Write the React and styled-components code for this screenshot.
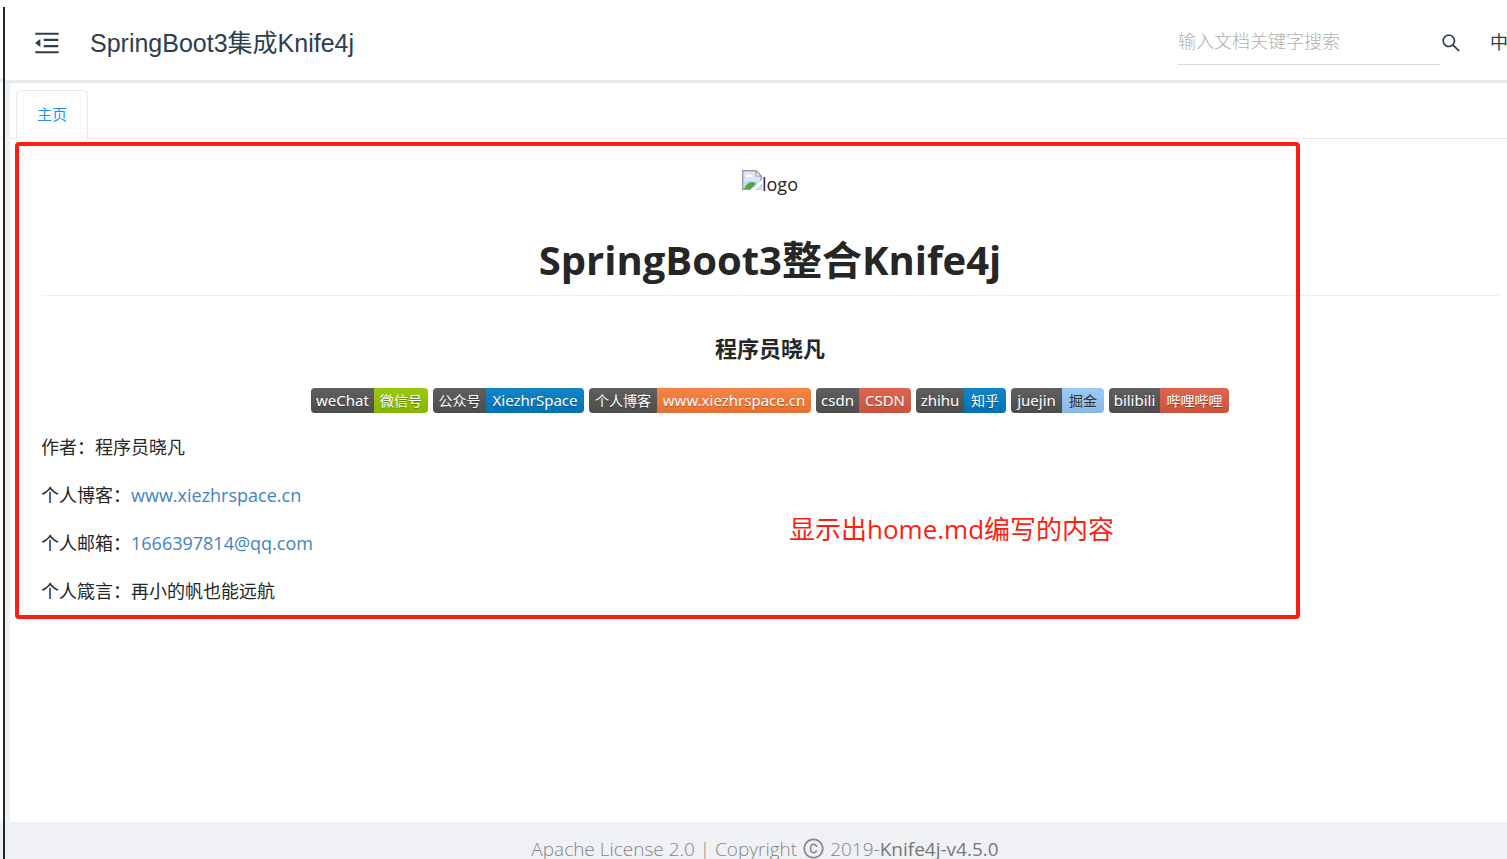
import styled, { createGlobalStyle } from "styled-components";
import {
  AiOutlineCopyright,
  AiOutlineMenuFold,
  AiOutlineSearch,
} from "react-icons/ai";

const badges = [
  { label: "weChat", value: "微信号", color: "#97ca00", left: 63, right: 54 },
  { label: "公众号", value: "XiezhrSpace", color: "#007ec6", left: 53, right: 98 },
  { label: "个人博客", value: "www.xiezhrspace.cn", color: "#fe7d37", left: 68, right: 154 },
  { label: "csdn", value: "CSDN", color: "#e05d44", left: 43, right: 52 },
  { label: "zhihu", value: "知乎", color: "#007ec6", left: 48, right: 42 },
  { label: "juejin", value: "掘金", color: "#99ccff", left: 51, right: 42, dark: true },
  { label: "bilibili", value: "哔哩哔哩", color: "#e05d44", left: 51, right: 69 },
];

const isLatin = (text) => /^[\w.]+$/.test(text);

export default function App() {
  return (
    <>
      <GlobalStyle />
      <ShellStyled>
        <SiderEdgeStyled>
          <SiderHeaderStyled />
          <SiderTabStyled />
          <SiderBodyStyled />
          <SiderFooterStyled />
        </SiderEdgeStyled>
        <SiderStyled />
        <MainStyled>
          <Header />
          <BodyStyled>
            <Tabs />
            <Home />
          </BodyStyled>
          <Footer />
        </MainStyled>
      </ShellStyled>
    </>
  );
}

function Header() {
  return (
    <HeaderStyled>
      <IconButtonStyled $size={30} type="button" aria-label="折叠菜单">
        <AiOutlineMenuFold />
      </IconButtonStyled>
      <TitleStyled>SpringBoot3集成Knife4j</TitleStyled>
      <SearchStyled role="search">
        <SearchInputStyled
          type="text"
          placeholder="输入文档关键字搜索"
          aria-label="输入文档关键字搜索"
        />
        <IconButtonStyled $size={22} type="button" aria-label="搜索">
          <AiOutlineSearch />
        </IconButtonStyled>
      </SearchStyled>
      <LanguageStyled type="button">中</LanguageStyled>
    </HeaderStyled>
  );
}

function Tabs() {
  return (
    <TabsStyled role="tablist">
      <TabStyled type="button" role="tab" aria-selected="true">
        主页
      </TabStyled>
    </TabsStyled>
  );
}

function Badge({ label, value, color, left, right, dark }) {
  return (
    <BadgeStyled href="#">
      <BadgePartStyled $width={left} $color="#555" $latin={isLatin(label)}>
        {label}
      </BadgePartStyled>
      <BadgePartStyled
        $width={right}
        $color={color}
        $latin={isLatin(value)}
        $dark={dark}
      >
        {value}
      </BadgePartStyled>
    </BadgeStyled>
  );
}

function Home() {
  return (
    <HomeStyled>
      <LogoStyled>
        <BrokenImage />
        logo
      </LogoStyled>
      <HeadingStyled>SpringBoot3整合Knife4j</HeadingStyled>
      <SubheadingStyled>程序员晓凡</SubheadingStyled>
      <BadgesStyled>
        {badges.map((badge) => (
          <Badge key={badge.label} {...badge} />
        ))}
      </BadgesStyled>
      <ParagraphStyled>作者：程序员晓凡</ParagraphStyled>
      <ParagraphStyled>
        个人博客：<LinkStyled href="#">www.xiezhrspace.cn</LinkStyled>
      </ParagraphStyled>
      <ParagraphStyled>
        个人邮箱：<LinkStyled href="#">1666397814@qq.com</LinkStyled>
      </ParagraphStyled>
      <ParagraphStyled>个人箴言：再小的帆也能远航</ParagraphStyled>
      <MarkerStyled>
        <MarkerTextStyled>显示出home.md编写的内容</MarkerTextStyled>
      </MarkerStyled>
    </HomeStyled>
  );
}

function BrokenImage() {
  return (
    <svg width="20" height="20" viewBox="0 0 20 20" aria-hidden="true">
      <path d="M1 1h13l5 5v13H1z" fill="#c6d9f7" />
      <path d="M2 2h11v5h5v4H2z" fill="#d9e6fb" />
      <path d="M4 7q0-2 2-2 1-2 3 0 2 0 2 2z" fill="#fff" />
      <path d="M2 19q3-7 8-7 3 0 4 2l-5 5z" fill="#4fa83a" />
      <path d="M14 1v5h5z" fill="#fff" stroke="#9a9a9a" />
      <path d="M.7 19.3V.7H14l5.3 5.3v13.3z" fill="none" stroke="#9a9a9a" strokeWidth="1.3" />
      <path d="M8 20 20 10v4l-6 6z" fill="#fff" />
      <path d="m15 20 5-5v5z" fill="#c6d9f7" />
    </svg>
  );
}

function Footer() {
  return (
    <FooterStyled>
      Apache License 2.0 | Copyright
      <AiOutlineCopyright size={23} />
      <span>
        2019-<VersionStyled>Knife4j-v4.5.0</VersionStyled>
      </span>
    </FooterStyled>
  );
}

const GlobalStyle = createGlobalStyle`
  * {
    box-sizing: border-box;
  }

  body {
    margin: 0;
    background: #fff;
    color: #262626;
    font-family: "Open Sans", "Noto Sans CJK SC", sans-serif;
  }

  button {
    padding: 0;
    border: none;
    background: none;
    font-family: inherit;
    cursor: pointer;
  }
`;

const ShellStyled = styled.div`
  display: flex;
  height: 100vh;
  overflow: hidden;
`;

const SiderEdgeStyled = styled.div`
  display: flex;
  flex-direction: column;
  width: 3px;
`;

const SiderHeaderStyled = styled.div`
  height: 82px;
  border-bottom: 3px solid #e8ebef;
`;

const SiderTabStyled = styled.div`
  height: 56px;
  border-bottom: 1px solid #e8e8e8;
`;

const SiderBodyStyled = styled.div`
  flex: 1;
`;

const SiderFooterStyled = styled.div`
  height: 38px;
  background: #f0f2f5;
`;

const SiderStyled = styled.aside`
  width: 2px;
  margin-top: 7px;
  background: #1d282e;
`;

const MainStyled = styled.div`
  display: flex;
  flex: 1;
  flex-direction: column;
  min-width: 0;
  background: #eff1f5;
`;

const HeaderStyled = styled.header`
  display: flex;
  align-items: center;
  height: 83px;
  padding: 5px 0 0 27px;
  overflow: hidden;
  background: #fff;
  border-bottom: 3px solid #e7eaee;
  color: #2c3e50;
`;

const IconButtonStyled = styled.button`
  display: flex;
  color: inherit;
  font-size: ${(props) => props.$size}px;
`;

const TitleStyled = styled.span`
  margin-left: 28px;
  font-family: "Liberation Sans", "Noto Sans CJK SC", sans-serif;
  font-size: 25px;
  line-height: 36px;
  white-space: nowrap;
`;

const SearchStyled = styled.form`
  display: flex;
  align-items: center;
  margin-left: auto;
`;

const SearchInputStyled = styled.input`
  width: 262px;
  height: 44px;
  padding: 0 0 2px;
  border: none;
  border-bottom: 1px solid #d9d9d9;
  outline: none;
  font-family: inherit;
  font-size: 18px;
  font-weight: 300;

  &::placeholder {
    color: #b0b0b0;
  }
`;

const LanguageStyled = styled.button`
  flex: none;
  width: 17px;
  padding-bottom: 4px;
  margin-left: 28px;
  color: #2c3e50;
  font-size: 18px;
  white-space: nowrap;
`;

const BodyStyled = styled.main`
  flex: 1;
  margin-left: 5px;
  padding-top: 7px;
  background: #fff;
`;

const TabsStyled = styled.div`
  display: flex;
  padding-left: 6px;
  border-bottom: 1px solid #e8e8e8;
`;

const TabStyled = styled.button`
  && {
    height: 49px;
    margin-bottom: -1px;
    padding: 0 20px 4px;
    border: 1px solid #e8e8e8;
    border-bottom: none;
    border-radius: 5px 5px 0 0;
    background: #fff;
    color: #1890ff;
    font-size: 15px;
  }
`;

const HomeStyled = styled.section`
  position: relative;
  padding: 31px 8px 0 31px;
`;

const LogoStyled = styled.div`
  display: flex;
  justify-content: center;
  height: 28px;
  font-size: 18px;
  line-height: 28px;
`;

const HeadingStyled = styled.h1`
  margin: 32px 0 0;
  padding-bottom: 5px;
  border-bottom: 1px solid #eee;
  font-size: 40px;
  line-height: 60px;
  text-align: center;
`;

const SubheadingStyled = styled.h3`
  margin: 36px 0 0;
  font-size: 22px;
  line-height: 32px;
  text-align: center;
`;

const BadgesStyled = styled.div`
  display: flex;
  justify-content: center;
  gap: 5px;
  margin-top: 24px;
`;

const BadgeStyled = styled.a`
  display: flex;
  height: 25px;
  overflow: hidden;
  border-radius: 4px;
  text-decoration: none;
`;

const BadgePartStyled = styled.span`
  width: ${(props) => props.$width}px;
  background: linear-gradient(rgba(187, 187, 187, 0.1), rgba(0, 0, 0, 0.1))
    ${(props) => props.$color};
  color: ${(props) => (props.$dark ? "#333" : "#fff")};
  font-family: "Noto Sans", "Noto Sans CJK SC", sans-serif;
  font-size: ${(props) => (props.$latin ? 15 : 14)}px;
  line-height: 25px;
  text-align: center;
  text-shadow: 0 1px 0
    ${(props) => (props.$dark ? "rgba(204, 204, 204, 0.3)" : "rgba(1, 1, 1, 0.3)")};
  white-space: nowrap;
`;

const ParagraphStyled = styled.p`
  margin: 20px 0 0;
  font-size: 18px;
  line-height: 28px;
`;

const LinkStyled = styled.a`
  color: #4183c4;
  text-decoration: none;
`;

/* red frame drawn over the page */
const MarkerStyled = styled.div`
  position: absolute;
  top: 3px;
  right: 207px;
  left: 5px;
  height: 477px;
  border: 4px solid #fe1d13;
  border-radius: 4px;
  pointer-events: none;
`;

const MarkerTextStyled = styled.span`
  position: absolute;
  top: 363px;
  left: 770px;
  color: #fe1d13;
  font-size: 26px;
  line-height: 40px;
  white-space: nowrap;
`;

const FooterStyled = styled.footer`
  display: flex;
  align-items: center;
  justify-content: center;
  gap: 5px;
  height: 37px;
  padding: 16px 0 0 18px;
  color: #858585;
  font-size: 19px;
  font-weight: 300;
  line-height: 28px;
  white-space: nowrap;
`;

const VersionStyled = styled.strong`
  color: #777;
  font-weight: 400;
`;
